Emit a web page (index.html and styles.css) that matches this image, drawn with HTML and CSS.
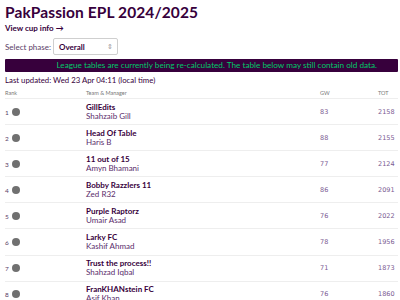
FILE: index.html
```html
<!DOCTYPE html>
<html>
<head>
<meta charset="utf-8">
<link rel="stylesheet" href="styles.css">
</head>
<body>
<div class="page">
  <h1 class="title">PakPassion EPL 2024/2025</h1>
  <a class="cup-link" href="#">View cup info →</a>
  <div class="phase">
    <label class="phase-label">Select phase:</label>
    <div class="select"><span>Overall</span><span class="arrows">⇕</span></div>
  </div>
  <div class="banner">League tables are currently being re-calculated. The table below may still contain old data.</div>
  <div class="updated">Last updated: Wed 23 Apr 04:11 (local time)</div>
  <table class="standings">
    <thead>
      <tr><th class="c-rank">Rank</th><th class="c-team">Team &amp; Manager</th><th class="c-gw">GW</th><th class="c-tot">TOT</th></tr>
    </thead>
    <tbody>
      <tr><td class="c-rank">1<span class="dot"></span></td><td class="c-team"><div class="team">GillEdits</div><div class="mgr">Shahzaib Gill</div></td><td class="c-gw">83</td><td class="c-tot">2158</td></tr>
      <tr><td class="c-rank">2<span class="dot"></span></td><td class="c-team"><div class="team">Head Of Table</div><div class="mgr">Haris B</div></td><td class="c-gw">88</td><td class="c-tot">2155</td></tr>
      <tr><td class="c-rank">3<span class="dot"></span></td><td class="c-team"><div class="team">11 out of 15</div><div class="mgr">Amyn Bhamani</div></td><td class="c-gw">77</td><td class="c-tot">2124</td></tr>
      <tr><td class="c-rank">4<span class="dot"></span></td><td class="c-team"><div class="team">Bobby Razzlers 11</div><div class="mgr">Zed R32</div></td><td class="c-gw">86</td><td class="c-tot">2091</td></tr>
      <tr><td class="c-rank">5<span class="dot"></span></td><td class="c-team"><div class="team">Purple Raptorz</div><div class="mgr">Umair Asad</div></td><td class="c-gw">76</td><td class="c-tot">2022</td></tr>
      <tr><td class="c-rank">6<span class="dot"></span></td><td class="c-team"><div class="team">Larky FC</div><div class="mgr">Kashif Ahmad</div></td><td class="c-gw">78</td><td class="c-tot">1956</td></tr>
      <tr><td class="c-rank">7<span class="dot"></span></td><td class="c-team"><div class="team">Trust the process!!</div><div class="mgr">Shahzad Iqbal</div></td><td class="c-gw">71</td><td class="c-tot">1873</td></tr>
      <tr><td class="c-rank">8<span class="dot"></span></td><td class="c-team"><div class="team">FranKHANstein FC</div><div class="mgr">Asif Khan</div></td><td class="c-gw">76</td><td class="c-tot">1860</td></tr>
    </tbody>
  </table>
</div>
</body>
</html>
```
FILE: styles.css
```css
html, body {
  margin: 0;
  padding: 0;
  background: #ffffff;
}
.page {
  padding: 3px 2px 0 5px;
  font-family: "Lato", "Noto Sans", sans-serif;
  color: #37003c;
}
.title {
  margin: 0;
  font-size: 15.5px;
  line-height: 18px;
  font-weight: 700;
  letter-spacing: 0.1px;
}
.cup-link {
  display: block;
  margin-top: 2px;
  font-size: 8px;
  line-height: 10px;
  font-weight: 700;
  color: #37003c;
  text-decoration: none;
}
.phase {
  display: flex;
  align-items: center;
  gap: 2px;
  margin-top: 5px;
}
.phase-label {
  font-size: 8px;
  color: #5a3d66;
}
.select {
  width: 65px;
  height: 17px;
  box-sizing: border-box;
  border: 1px solid #cfcfcf;
  border-radius: 2px;
  display: flex;
  align-items: center;
  justify-content: space-between;
  padding: 0 4px 0 5px;
  font-size: 8px;
  font-weight: 700;
  background: #fff;
}
.arrows {
  font-size: 7px;
  font-weight: 400;
  color: #999;
}
.banner {
  margin-top: 4px;
  height: 13px;
  background: #37003c;
  color: #00c868;
  font-size: 8.2px;
  line-height: 13px;
  text-align: right;
  padding-right: 21px;
  border-radius: 1px;
}
.updated {
  margin-top: 2px;
  font-size: 7.8px;
  line-height: 12px;
}
.standings {
  width: 100%;
  border-collapse: collapse;
  margin-top: 0;
}
.standings th {
  font-size: 5.5px;
  font-weight: 400;
  color: #777;
  text-align: left;
  height: 7px;
  padding: 3px 0 2px 0;
  border-bottom: 1px solid #eee;
}
.standings td {
  height: 25.1px;
  padding: 0;
  border-bottom: 1px solid #eee;
  vertical-align: middle;
}
.c-rank {
  width: 81px;
  font-size: 6.5px;
  color: #5a3d66;
}
.c-gw {
  width: 58px;
}
.c-tot {
  width: 20px;
}
th.c-gw, th.c-tot {
  text-align: left;
}
td.c-gw, td.c-tot {
  font-family: "DejaVu Sans", sans-serif;
  font-size: 6.5px;
  color: #7b5b92;
}
.dot {
  display: inline-block;
  width: 8px;
  height: 8px;
  border-radius: 50%;
  background: #707070;
  margin-left: 3px;
  vertical-align: -1px;
}
.team {
  font-size: 8px;
  font-weight: 700;
  line-height: 9px;
}
.mgr {
  font-size: 8px;
  line-height: 9px;
  color: #5a2d6b;
}
```
